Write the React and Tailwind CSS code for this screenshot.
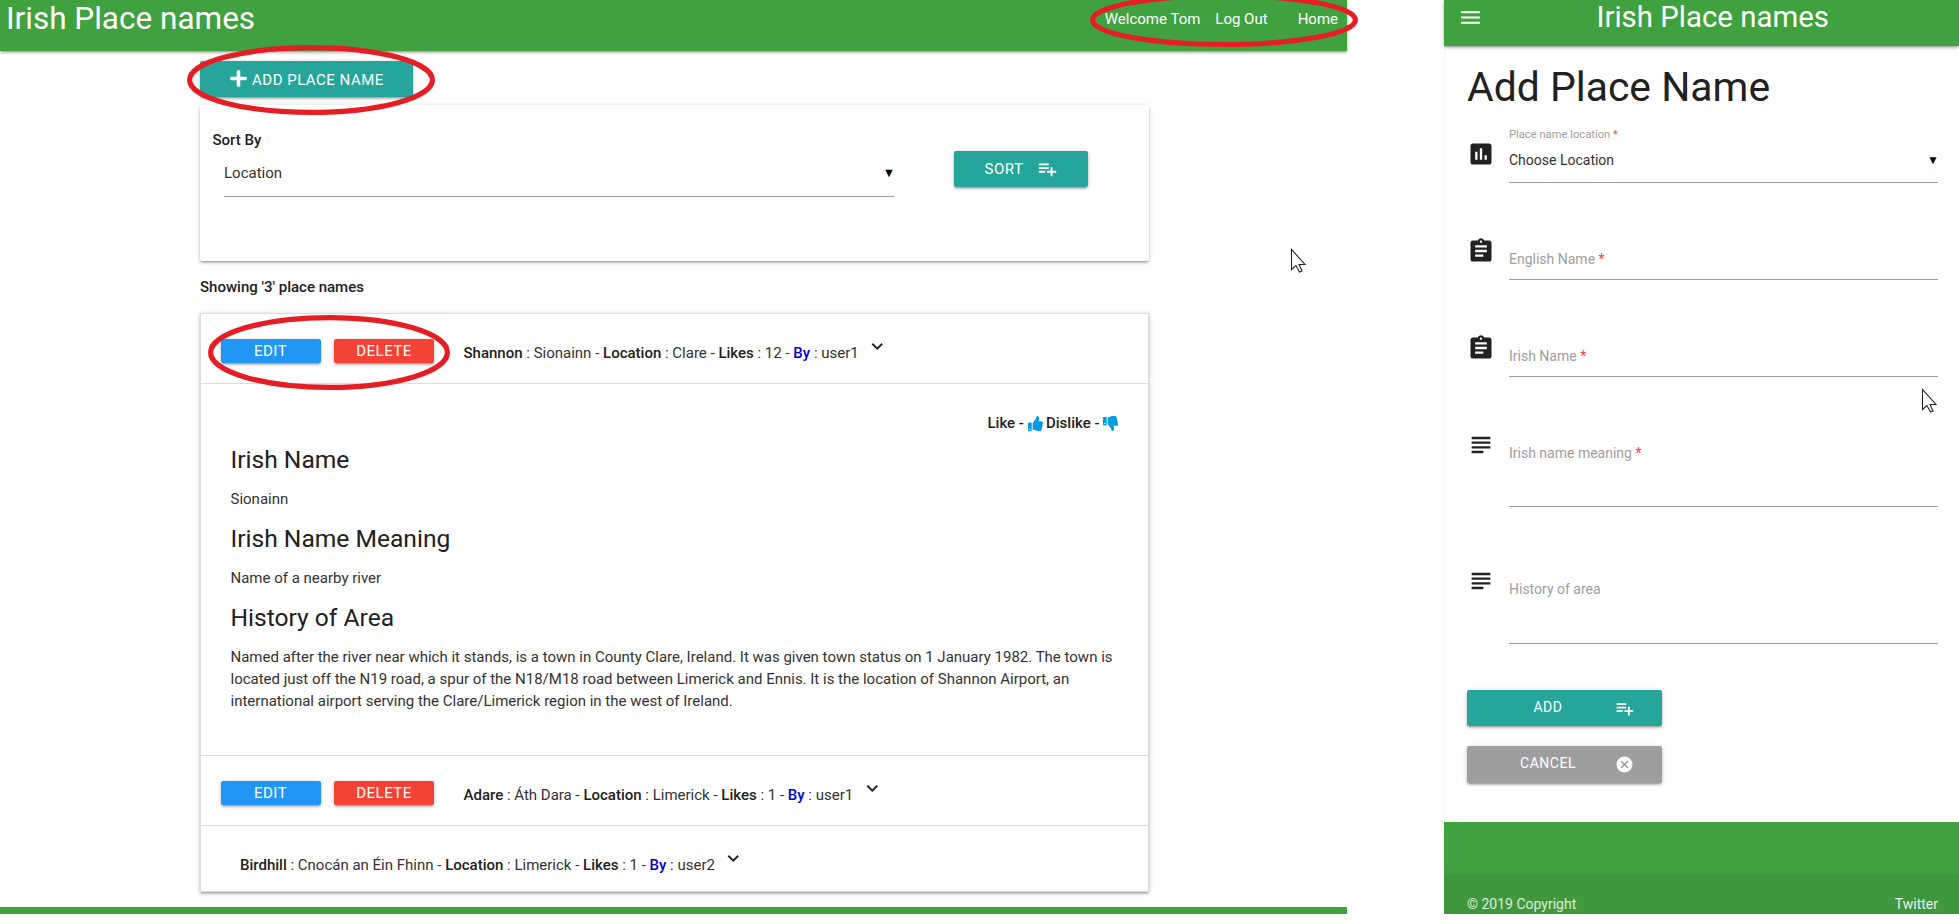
import React from "react";
import { FaPlus, FaThumbsUp, FaThumbsDown } from "react-icons/fa";
import {
  MdPlaylistAdd,
  MdExpandMore,
  MdMenu,
  MdAssessment,
  MdAssignment,
  MdSubject,
  MdCancel,
} from "react-icons/md";

const raised =
  "shadow-[0_2px_2px_0_rgba(0,0,0,0.14),0_3px_1px_-2px_rgba(0,0,0,0.12),0_1px_5px_0_rgba(0,0,0,0.2)]";

function Ring({ className, w, h }) {
  return (
    <svg className={`absolute ${className}`} width={w} height={h}>
      <ellipse
        cx={w / 2}
        cy={h / 2}
        rx={w / 2 - 2.6}
        ry={h / 2 - 2.6}
        fill="none"
        stroke="#e51e25"
        strokeWidth="5.2"
      />
    </svg>
  );
}

function Cursor({ className }) {
  return (
    <svg className={`absolute ${className}`} width="17" height="26" viewBox="0 0 17 26">
      <path
        d="M1.5 1.5V21.5L6 17.5L9.5 24L12 23L9 16.5H15L1.5 1.5Z"
        fill="#fff"
        stroke="#222"
        strokeWidth="1.1"
      />
    </svg>
  );
}

function Summary({ name, irish, location, likes, user, editable }) {
  return (
    <div className="flex h-full items-start">
      {editable ? (
        <div className="mr-[29.5px] ml-5 flex gap-[13px] pt-[25px] text-[15px] leading-6 tracking-[0.5px] text-white">
          <button className={`h-6 w-[100px] rounded-xs bg-[#2196f3] pr-px ${raised}`}>EDIT</button>
          <button className={`h-6 w-[100px] rounded-xs bg-[#f44336] ${raised}`}>DELETE</button>
        </div>
      ) : (
        <div className="w-[39px]" />
      )}
      <p className="mt-7 leading-[22px] whitespace-nowrap text-[#333]">
        <b className="font-medium text-[#212121]">{name}</b> : {irish} -{" "}
        <b className="font-medium text-[#212121]">Location</b> : {location} -{" "}
        <b className="font-medium text-[#212121]">Likes</b> : {likes} -{" "}
        <b className="font-medium text-[#0000cd]">By</b> : {user}
      </p>
      <MdExpandMore className="mt-[21px] ml-[7.5px] size-[22.5px]" />
    </div>
  );
}

function Section({ title, children }) {
  return (
    <>
      <h4 className="text-[24.6px] leading-[27px]">{title}</h4>
      <p className="mt-[15px] mb-[15px] leading-[22px] text-[#333]">{children}</p>
    </>
  );
}

function Field({ icon: Icon, label, required, className }) {
  return (
    <div className={`flex ${className}`}>
      <Icon className="-ml-px size-7 shrink-0" />
      <div className="ml-3.5 flex-1 border-b border-[#9e9e9e] pt-[11px] leading-[22px] text-[#9e9e9e]">
        {label} {required && <span className="text-[#f44336]">*</span>}
      </div>
    </div>
  );
}

function Desktop() {
  return (
    <section className="flex h-[914px] w-[1347px] flex-col text-[15px]">
      <header
        className={`flex h-[51px] shrink-0 items-center bg-[#40a23f] pr-[9px] pb-[14px] pl-[6px] text-white ${raised}`}
      >
        <h1 className="flex-1 pt-px text-[31.5px] leading-9">Irish Place names</h1>
        <nav className="flex pt-0.5">
          <a>Welcome Tom</a>
          <a className="ml-[15px]">Log Out</a>
          <a className="ml-[30px]">Home</a>
        </nav>
      </header>
      <main className="ml-[200px] w-[949px] flex-1">
        <button
          className={`mt-[10px] flex h-9 w-[213px] items-center rounded-xs bg-[#26a69a] pt-[3px] pl-[29px] tracking-[0.5px] text-white ${raised}`}
        >
          <FaPlus className="mr-1 -mt-1 size-[19px]" />
          ADD PLACE NAME
        </button>
        <div className={`mt-2 h-[156px] rounded-xs pt-6 ${raised}`}>
          <p className="ml-[12.5px] leading-[22px] font-medium">Sort By</p>
          <div className="ml-6 flex">
            <div className="flex h-[46px] w-[670px] items-center justify-between border-b border-[#9e9e9e] text-[#333]">
              Location
              <span className="-mr-px text-[12.5px] text-black">▼</span>
            </div>
            <button
              className={`ml-[60px] flex h-9 w-[134px] items-center rounded-xs bg-[#26a69a] pl-[30.5px] tracking-[0.5px] text-white ${raised}`}
            >
              SORT
              <MdPlaylistAdd className="ml-[13px] size-[22px]" />
            </button>
          </div>
        </div>
        <p className="mt-[15px] leading-[22px] font-medium">Showing '3' place names</p>
        <ul className={`mt-[15px] border border-[#ddd] ${raised}`}>
          <li className="h-[70px] border-b border-[#ddd]">
            <Summary editable name="Shannon" irish="Sionainn" location="Clare" likes="12" user="user1" />
          </li>
          <li className="h-[372px] border-b border-[#ddd] pt-7 pr-[30px] pl-[29.5px]">
            <div className="mb-3 flex h-[22px] items-center justify-end font-medium">
              Like -<FaThumbsUp className="mr-[3px] ml-1 size-[15px] text-[#039be5]" />
              Dislike -<FaThumbsDown className="ml-[3.5px] size-[15px] text-[#039be5]" />
            </div>
            <Section title="Irish Name">Sionainn</Section>
            <Section title="Irish Name Meaning">Name of a nearby river</Section>
            <Section title="History of Area">
              Named after the river near which it stands, is a town in County Clare, Ireland. It was given town status
              on 1 January 1982. The town is
              <br />
              located just off the N19 road, a spur of the N18/M18 road between Limerick and Ennis. It is the location
              of Shannon Airport, an
              <br />
              international airport serving the Clare/Limerick region in the west of Ireland.
            </Section>
          </li>
          <li className="h-[70px] border-b border-[#ddd]">
            <Summary editable name="Adare" irish="Áth Dara" location="Limerick" likes="1" user="user1" />
          </li>
          <li className="h-[65px]">
            <Summary name="Birdhill" irish="Cnocán an Éin Fhinn" location="Limerick" likes="1" user="user2" />
          </li>
        </ul>
      </main>
      <footer className="h-[7px] shrink-0 bg-[#40a23f]" />
    </section>
  );
}

function Mobile() {
  return (
    <section className="flex h-[914px] w-[515px] flex-col border-l border-[#f7f7f7] text-[14px]">
      <header className={`-ml-px flex h-[45.5px] shrink-0 items-start bg-[#40a23f] text-white ${raised}`}>
        <MdMenu className="mt-[4.5px] ml-3.5 size-[25px]" />
        <h1 className="ml-[113.5px] text-[29.4px] leading-[34px]">Irish Place names</h1>
      </header>
      <form className="flex-1 pr-[21px] pl-[23px]">
        <h2 className="mt-[18.5px] -ml-px text-[40.9px] leading-[47px]">Add Place Name</h2>
        <div className="mt-4 flex">
          <MdAssessment className="mt-[13px] -ml-px size-7" />
          <div className="ml-3.5 h-14 flex-1 border-b border-[#9e9e9e]">
            <p className="text-[11.2px] leading-4 text-[#9e9e9e]">
              Place name location <span className="text-[#f44336]">*</span>
            </p>
            <div className="mt-1.5 flex items-center justify-between leading-[22px] text-[#333]">
              Choose Location
              <span className="-mr-px text-[12px] text-black">▼</span>
            </div>
          </div>
        </div>
        <Field icon={MdAssignment} label="English Name" required className="mt-[54px] h-[43px]" />
        <Field icon={MdAssignment} label="Irish Name" required className="mt-[54px] h-[43px]" />
        <Field icon={MdSubject} label="Irish name meaning" required className="mt-[54px] h-[76px]" />
        <Field icon={MdSubject} label="History of area" className="mt-[60px] h-[77px]" />
        <button
          type="button"
          className={`mt-[46px] -ml-px flex h-9 w-[195px] items-center rounded-xs bg-[#26a69a] tracking-[0.5px] text-white ${raised}`}
        >
          <span className="-mt-0.5 w-[162px] text-center">ADD</span>
          <MdPlaylistAdd className="-ml-[15px] size-[21px]" />
        </button>
        <button
          type="button"
          className={`mt-5 -ml-px flex h-[37px] w-[195px] items-center rounded-xs bg-[#9e9e9e] tracking-[0.5px] text-white ${raised}`}
        >
          <span className="-mt-0.5 w-[162px] text-center">CANCEL</span>
          <MdCancel className="-ml-3.5 size-[19px]" />
        </button>
      </form>
      <footer className="-ml-px flex h-[92px] shrink-0 flex-col justify-end bg-[#40a23f]">
        <div className="flex h-10 justify-between bg-[#3f983e] pt-[19px] pr-[21px] pl-[23px] leading-[22px]">
          <span className="text-white/80">© 2019 Copyright</span>
          <a className="text-[#eee]">Twitter</a>
        </div>
      </footer>
    </section>
  );
}

export default function App() {
  return (
    <div className="relative flex h-[924px] w-[1959px] justify-between overflow-hidden bg-white font-[Roboto,sans-serif] text-[#212121]">
      <Desktop />
      <Mobile />
      <Ring className="top-[45px] left-[187px]" w={248} h={70} />
      <Ring className="top-[-7px] left-[1090px]" w={268} h={54} />
      <Ring className="top-[315px] left-[208px]" w={242} h={75} />
      <Cursor className="top-[248px] left-[1290px]" />
      <Cursor className="top-[388px] left-[1921px]" />
    </div>
  );
}
